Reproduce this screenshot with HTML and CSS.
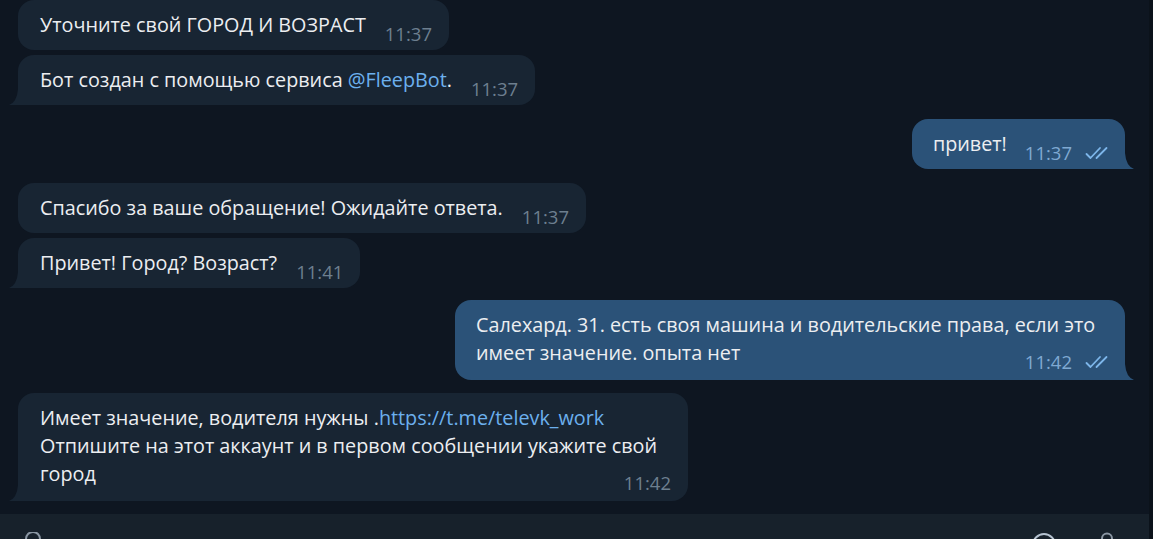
FILE: index.html
```html
<!DOCTYPE html>
<html lang="ru">
<head>
<meta charset="utf-8">
<title>Chat</title>
<link rel="stylesheet" href="styles.css">
</head>
<body>
<div class="chat">
  <div class="messages">
    <div class="row in">
      <div class="bubble in">Уточните свой ГОРОД И ВОЗРАСТ<span class="meta">11:37</span></div>
    </div>
    <div class="row in gap-s">
      <div class="bubble in tail">Бот создан с помощью сервиса <span class="link">@FleepBot</span>.<span class="meta">11:37</span>
        <svg class="tail-svg" width="9" height="16" viewBox="0 0 9 16"><path d="M9 0 Q8 13 0 16 L9 16 Z"/></svg>
      </div>
    </div>
    <div class="row out gap-l">
      <div class="bubble out tail">привет!<span class="meta">11:37<svg class="checks" width="27" height="14" viewBox="0 0 27 14"><path d="M1.5 8 L5.5 12 L15 2 M11.5 12 L21.5 2" /></svg></span>
        <svg class="tail-svg" width="9" height="16" viewBox="0 0 9 16"><path d="M0 0 Q1 13 9 16 L0 16 Z"/></svg>
      </div>
    </div>
    <div class="row in gap-l">
      <div class="bubble in">Спасибо за ваше обращение! Ожидайте ответа.<span class="meta">11:37</span></div>
    </div>
    <div class="row in gap-s">
      <div class="bubble in tail">Привет! Город? Возраст?<span class="meta">11:41</span>
        <svg class="tail-svg" width="9" height="16" viewBox="0 0 9 16"><path d="M9 0 Q8 13 0 16 L9 16 Z"/></svg>
      </div>
    </div>
    <div class="row out gap-m">
      <div class="bubble out tail multi">Салехард. 31. есть своя машина и водительские права, если это имеет значение. опыта нет<span class="meta">11:42<svg class="checks" width="27" height="14" viewBox="0 0 27 14"><path d="M1.5 8 L5.5 12 L15 2 M11.5 12 L21.5 2" /></svg></span>
        <svg class="tail-svg" width="9" height="16" viewBox="0 0 9 16"><path d="M0 0 Q1 13 9 16 L0 16 Z"/></svg>
      </div>
    </div>
    <div class="row in gap-m2">
      <div class="bubble in tail multi">Имеет значение, водителя нужны .<span class="link">https://t.me/televk_work</span><br>Отпишите на этот аккаунт и в первом сообщении укажите свой город<span class="meta">11:42</span>
        <svg class="tail-svg" width="9" height="16" viewBox="0 0 9 16"><path d="M9 0 Q8 13 0 16 L9 16 Z"/></svg>
      </div>
    </div>
  </div>
  <div class="composer">
    <svg class="icon attach" width="22" height="26" viewBox="0 0 22 26"><path d="M4 14 V7 a7 7 0 0 1 14 0 V17 a5 5 0 0 1 -10 0 V8"/></svg>
    <div class="spacer"></div>
    <svg class="icon emoji" width="26" height="26" viewBox="0 0 26 26"><circle cx="13" cy="13" r="11"/></svg>
    <svg class="icon mic" width="20" height="26" viewBox="0 0 20 26"><rect x="5" y="1.5" width="10" height="16" rx="5"/></svg>
  </div>
</div>
</body>
</html>
```

FILE: styles.css
```css
html, body {
  margin: 0;
  padding: 0;
  height: 100%;
  overflow: hidden;
  background: #0e1621;
}

.chat {
  display: flex;
  flex-direction: column;
  height: 100%;
  box-sizing: border-box;
  border-right: 4px solid #0b121a;
  font-family: "Open Sans", "Noto Sans", sans-serif;
  color: #eceef1;
}

.messages {
  display: flex;
  flex-direction: column;
  flex: none;
  padding: 0 24px 13px 18px;
}

.row {
  display: flex;
}

.row.in { justify-content: flex-start; }
.row.out { justify-content: flex-end; }

.gap-s { margin-top: 5px; }
.gap-m { margin-top: 12px; }
.gap-m2 { margin-top: 13px; }
.gap-l { margin-top: 14px; }

.bubble {
  position: relative;
  max-width: 670px;
  box-sizing: border-box;
  padding: 11px 17px 11px 22px;
  font-size: 19.8px;
  line-height: 28px;
  border-radius: 16px;
  display: flow-root;
}

.bubble.multi { padding-bottom: 13px; }

.bubble.in { background: #182533; }
.bubble.out {
  background: #2b5278;
  padding-right: 13px;
  padding-left: 21px;
}

.bubble.in.tail { border-bottom-left-radius: 0; }
.bubble.out.tail { border-bottom-right-radius: 0; }

.tail-svg {
  position: absolute;
  bottom: 0;
}

.bubble.in .tail-svg { left: -9px; fill: #182533; }
.bubble.out .tail-svg { right: -9px; fill: #2b5278; }

.link { color: #6cb0ee; }

.meta {
  float: right;
  display: flex;
  align-items: center;
  margin: 9px 0 -9px 19px;
  font-size: 18.5px;
  line-height: 28px;
  color: #6d7f8f;
}

.bubble.out .meta { color: #7fa9d2; margin-left: 18px; }

.checks {
  margin-left: 13px;
  fill: none;
  stroke: #7db6ea;
  stroke-width: 1.8;
  stroke-linecap: round;
  stroke-linejoin: round;
}

.composer {
  display: flex;
  align-items: flex-start;
  flex: 1;
  min-height: 0;
  overflow: hidden;
  padding: 18px 32px 0 22px;
  background: #17212b;
  gap: 40px;
}

.spacer { flex: 1; }

.icon {
  flex: none;
  fill: none;
  stroke: #8a96a3;
  stroke-width: 2;
  stroke-linecap: round;
}

.icon.emoji { stroke: #b5c2d0; }
```
